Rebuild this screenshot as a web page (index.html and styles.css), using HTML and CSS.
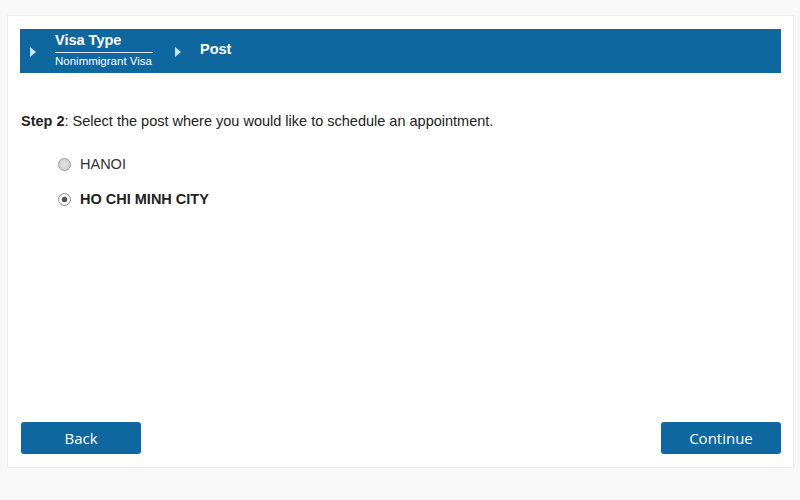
FILE: index.html
```html
<!DOCTYPE html>
<html lang="en">
<head>
    <meta charset="UTF-8">
    <meta name="viewport" content="width=device-width, initial-scale=1.0">
    <title>Select Post</title>
    <link rel="stylesheet" href="styles.css">
</head>
<body>
    <div class="panel">
        <div class="crumbs">
            <span class="arrow"></span>
            <div class="crumb">
                <div class="crumb-title">Visa Type</div>
                <div class="crumb-sub">Nonimmigrant Visa</div>
            </div>
            <span class="arrow"></span>
            <div class="crumb-title current">Post</div>
        </div>

        <p class="step"><b>Step 2</b>: Select the post where you would like to schedule an appointment.</p>

        <div class="options">
            <label class="option">
                <input type="radio" name="post" value="hanoi">
                <span class="dot"></span>
                HANOI
            </label>
            <label class="option selected">
                <input type="radio" name="post" value="hcmc" checked>
                <span class="dot"></span>
                HO CHI MINH CITY
            </label>
        </div>

        <div class="buttons">
            <button class="btn">Back</button>
            <button class="btn">Continue</button>
        </div>
    </div>
</body>
</html>
```

FILE: styles.css
```css
body {
    font-family: "Liberation Sans", Arial, sans-serif;
    margin: 0;
    padding: 0;
    background-color: #f8f8f8;
}

.panel {
    margin: 15px 6px 0 7px;
    padding: 13px 12px;
    box-sizing: border-box;
    height: 453px;
    background-color: #fff;
    border: 1px solid #ececec;
    display: flex;
    flex-direction: column;
}

.crumbs {
    height: 44px;
    background-color: #0f67a0;
    display: flex;
    align-items: center;
    color: #fff;
    padding-left: 10px;
}

.arrow {
    width: 0;
    height: 0;
    border-top: 5px solid transparent;
    border-bottom: 5px solid transparent;
    border-left: 6px solid #cde3f3;
    margin-right: 19px;
    margin-top: 2px;
}

.crumb {
    width: 98px;
    margin-right: 22px;
}

.crumb-title {
    font-weight: bold;
    font-size: 14.5px;
    line-height: 18px;
}

.crumb .crumb-title {
    border-bottom: 1px solid #d9e8f3;
    padding-bottom: 3px;
    margin-top: -3px;
}

.crumb-sub {
    font-size: 11.5px;
    line-height: 14px;
    margin-top: 1px;
}

.crumb-title.current {
    margin-top: -5px;
}

.step {
    margin: 40px 0 0 1px;
    font-size: 14.5px;
    line-height: 16px;
    color: #222;
}

.options {
    margin-top: 26px;
    margin-left: 38px;
}

.option {
    display: flex;
    align-items: center;
    height: 18px;
    margin-bottom: 17px;
    font-size: 14.5px;
    color: #333;
}

.option.selected {
    font-weight: bold;
    color: #222;
}

.option input {
    display: none;
}

.dot {
    width: 11px;
    height: 11px;
    border-radius: 50%;
    border: 1px solid #9a9a9a;
    background: radial-gradient(circle, #e4e4e4 0, #c9c9c9 100%);
    margin-right: 9px;
}

.option input:checked + .dot {
    background: radial-gradient(circle, #555 0, #555 2.5px, #fff 3.2px);
    border-color: #8a8a8a;
}

.buttons {
    margin-top: auto;
    display: flex;
    justify-content: space-between;
    padding-left: 1px;
}

.btn {
    width: 120px;
    height: 32px;
    background-color: #0f67a0;
    color: #fff;
    border: none;
    border-radius: 3px;
    font-family: "Open Sans", sans-serif;
    font-size: 15px;
    cursor: pointer;
}

.btn:hover {
    background-color: #0c5a8c;
}
```
